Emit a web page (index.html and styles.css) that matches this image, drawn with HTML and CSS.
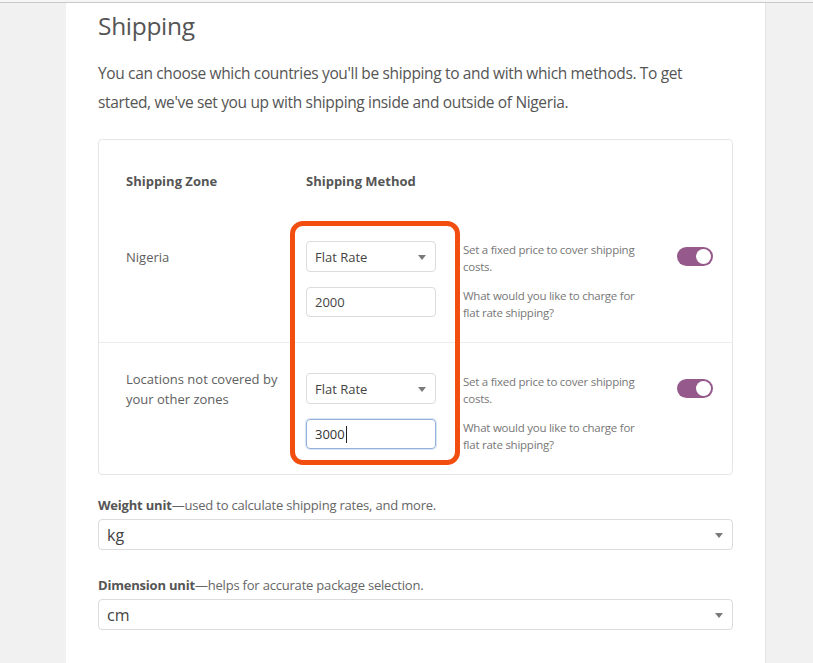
FILE: index.html
```html
<!DOCTYPE html>
<html>
<head>
<meta charset="utf-8">
<link rel="stylesheet" href="styles.css">
</head>
<body>
<div class="topbar"></div>
<div class="page">
  <div class="card">
    <h1 class="title">Shipping</h1>
    <p class="intro">You can choose which countries you'll be shipping to and with which methods. To get started, we've set you up with shipping inside and outside of Nigeria.</p>

    <div class="zones">
      <div class="zones-head">
        <div class="col-zone">Shipping Zone</div>
        <div class="col-method">Shipping Method</div>
      </div>

      <div class="zone-row">
        <div class="zone-name"><span>Nigeria</span></div>
        <div class="select small"><span>Flat Rate</span><i class="caret"></i></div>
        <div class="desc">Set a fixed price to cover shipping costs.</div>
        <div class="toggle-cell"><span class="toggle"><span class="knob"></span></span></div>
        <div class="input">2000</div>
        <div class="desc desc-2">What would you like to charge for flat rate shipping?</div>
      </div>

      <div class="zone-row bordered">
        <div class="zone-name"><span>Locations not covered by your other zones</span></div>
        <div class="select small"><span>Flat Rate</span><i class="caret"></i></div>
        <div class="desc">Set a fixed price to cover shipping costs.</div>
        <div class="toggle-cell"><span class="toggle"><span class="knob"></span></span></div>
        <div class="input focused">3000<span class="cursor"></span></div>
        <div class="desc desc-2">What would you like to charge for flat rate shipping?</div>
      </div>

      <div class="highlight"></div>
    </div>

    <div class="field">
      <div class="field-label"><b>Weight unit</b>—used to calculate shipping rates, and more.</div>
      <div class="select wide"><span>kg</span><i class="caret"></i></div>
    </div>

    <div class="field">
      <div class="field-label"><b>Dimension unit</b>—helps for accurate package selection.</div>
      <div class="select wide"><span>cm</span><i class="caret"></i></div>
    </div>
  </div>
</div>
</body>
</html>
```

FILE: styles.css
```css
* { box-sizing: border-box; }

html, body {
  margin: 0;
  padding: 0;
  height: 100%;
}

body {
  background: #f1f1f1;
  font-family: "Open Sans", "Noto Sans", sans-serif;
  color: #555;
  overflow: hidden;
}

.topbar {
  height: 3px;
  background: #f6f6f6;
  border-bottom: 1px solid #c9c9c9;
}

.page {
  display: flex;
  height: calc(100% - 3px);
}

.card {
  margin-left: 66px;
  width: 700px;
  background: #fff;
  border-right: 1px solid #e4e4e4;
  padding: 6px 32px 0 32px;
}

.title {
  margin: 0;
  font-size: 24.5px;
  font-weight: 400;
  line-height: 34px;
  color: #555;
  letter-spacing: -0.3px;
}

.intro {
  margin: 16px 0 22px;
  font-size: 15.5px;
  line-height: 29px;
  color: #555;
  letter-spacing: -0.35px;
}

.zones {
  position: relative;
  border: 1px solid #e6e6e6;
  border-radius: 4px;
  height: 336px;
}

.zones-head {
  display: flex;
  padding: 31px 0 0 27px;
  font-size: 13px;
  font-weight: 700;
  line-height: 20px;
  color: #555;
}

.col-zone { width: 180px; }

.zone-row {
  display: grid;
  grid-template-columns: 180px 130px 227px 1fr;
  grid-template-rows: 31px 30px;
  column-gap: 0;
  row-gap: 15px;
  padding: 50px 19px 25px 27px;
}

.zone-row.bordered {
  border-top: 1px solid #ececec;
  padding-top: 30px;
}

.zone-name {
  grid-row: 1;
  grid-column: 1;
  display: flex;
  align-items: center;
  height: 31px;
  font-size: 13px;
  line-height: 20px;
  color: #606060;
  padding-right: 18px;
}

.select {
  position: relative;
  display: flex;
  align-items: center;
  border: 1px solid #dcdcdc;
  border-radius: 4px;
  background: #fff;
  color: #444;
}

.select.small {
  grid-row: 1;
  grid-column: 2;
  height: 31px;
  font-size: 13px;
  padding-left: 8px;
}

.caret {
  position: absolute;
  right: 8px;
  top: 50%;
  margin-top: -2px;
  width: 0;
  height: 0;
  border-left: 4.5px solid transparent;
  border-right: 4.5px solid transparent;
  border-top: 5px solid #7a7a7a;
}

.select.small .caret { right: 9px; }

.input {
  grid-row: 2;
  grid-column: 2;
  height: 30px;
  border: 1px solid #dcdcdc;
  border-radius: 4px;
  font-size: 13px;
  line-height: 28px;
  padding-left: 8px;
  color: #444;
  display: flex;
  align-items: center;
}

.input.focused {
  border-color: #94b1dc;
  box-shadow: 0 0 0 1px #dbe6f4;
  color: #333;
}

.cursor {
  display: inline-block;
  width: 1px;
  height: 17px;
  background: #222;
  margin-left: 1px;
}

.desc {
  grid-row: 1;
  grid-column: 3;
  margin-left: 27px;
  width: 178px;
  font-size: 11.5px;
  line-height: 17px;
  color: #777;
  letter-spacing: -0.25px;
  align-self: start;
}

.desc-2 { grid-row: 2; }

.toggle-cell {
  grid-row: 1;
  grid-column: 4;
  display: flex;
  align-items: center;
  justify-content: flex-end;
  height: 31px;
}

.toggle {
  position: relative;
  display: block;
  width: 36px;
  height: 19px;
  border-radius: 10px;
  background: #955a8b;
}

.knob {
  position: absolute;
  right: 2px;
  top: 2px;
  width: 15px;
  height: 15px;
  border-radius: 50%;
  background: #fff;
}

.highlight {
  position: absolute;
  left: 191px;
  top: 81px;
  width: 170px;
  height: 244px;
  border: 5px solid #f24e10;
  border-radius: 13px;
  pointer-events: none;
}

.field { margin-top: 20px; }
.field + .field { margin-top: 25px; }

.field-label {
  font-size: 13px;
  line-height: 20px;
  color: #666;
  margin-bottom: 4px;
  letter-spacing: -0.2px;
}

.field-label b {
  color: #555;
  font-weight: 700;
}

.select.wide {
  height: 31px;
  font-size: 16px;
  padding-left: 8px;
  color: #444;
}

.select.wide .caret { right: 9px; }
```
